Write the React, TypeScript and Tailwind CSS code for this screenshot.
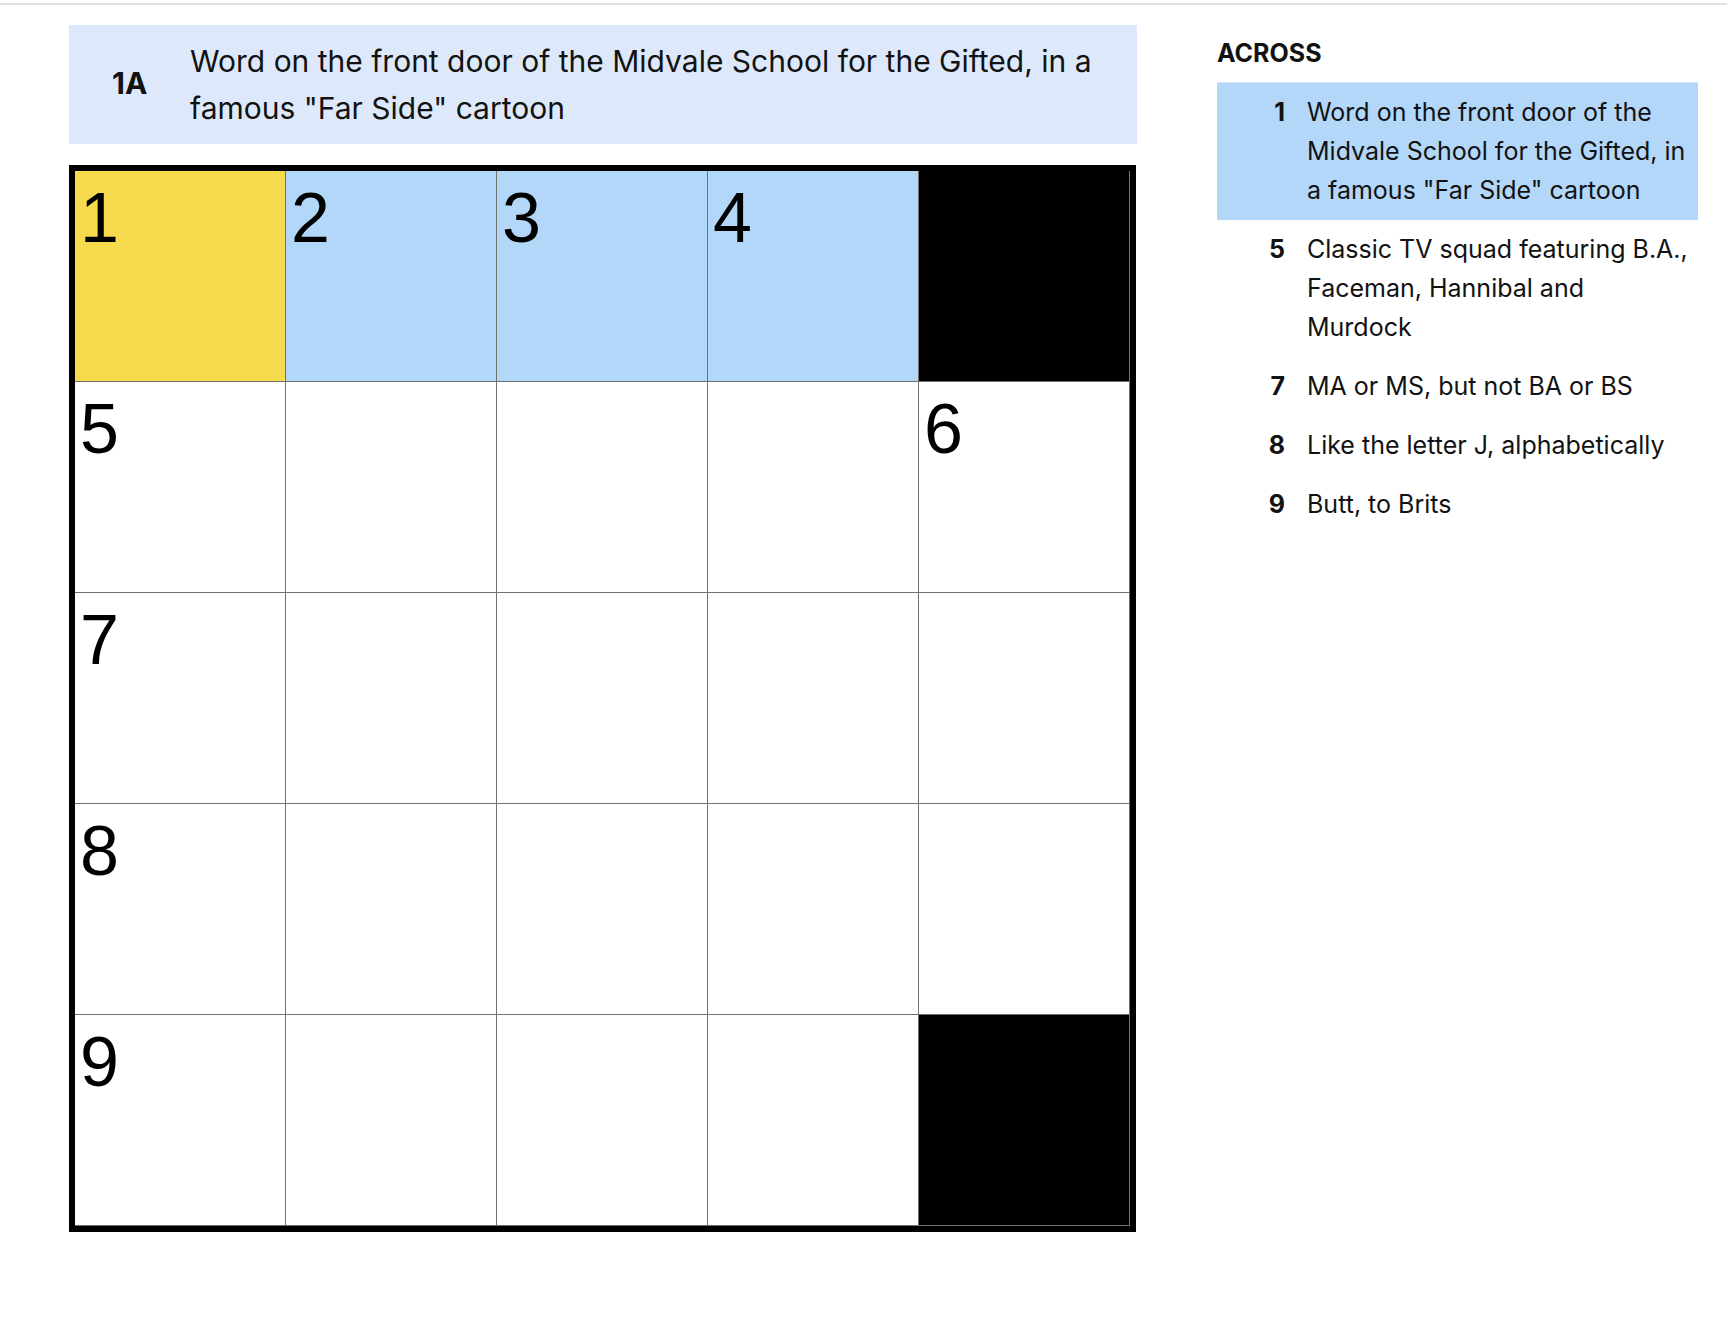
import React from "react";

type Cell = { num?: number; kind: "open" | "block" | "active" | "word" };

const GRID: Cell[][] = [
  [
    { num: 1, kind: "active" },
    { num: 2, kind: "word" },
    { num: 3, kind: "word" },
    { num: 4, kind: "word" },
    { kind: "block" },
  ],
  [{ num: 5, kind: "open" }, { kind: "open" }, { kind: "open" }, { kind: "open" }, { num: 6, kind: "open" }],
  [{ num: 7, kind: "open" }, { kind: "open" }, { kind: "open" }, { kind: "open" }, { kind: "open" }],
  [{ num: 8, kind: "open" }, { kind: "open" }, { kind: "open" }, { kind: "open" }, { kind: "open" }],
  [{ num: 9, kind: "open" }, { kind: "open" }, { kind: "open" }, { kind: "open" }, { kind: "block" }],
];

const ACROSS = [
  { num: 1, text: 'Word on the front door of the Midvale School for the Gifted, in a famous "Far Side" cartoon', active: true },
  { num: 5, text: "Classic TV squad featuring B.A., Faceman, Hannibal and Murdock" },
  { num: 7, text: "MA or MS, but not BA or BS" },
  { num: 8, text: "Like the letter J, alphabetically" },
  { num: 9, text: "Butt, to Brits" },
];

const cellBg: Record<Cell["kind"], string> = {
  open: "bg-white",
  block: "bg-black",
  active: "bg-[#f7da4e]",
  word: "bg-[#b3d7f9]",
};

function Board() {
  return (
    <div className="w-fit border-[6px] border-black bg-black">
      {GRID.map((row, r) => (
        <div key={r} className="flex">
          {row.map((cell, c) => (
            <div
              key={c}
              className={`h-[211px] w-[211px] border-r border-b border-[#707070] pl-[5px] pt-[12px] ${cellBg[cell.kind]}`}
            >
              {cell.num ? (
                <span className="block font-['Liberation_Sans',Arial,sans-serif] text-[70px] leading-none text-black">
                  {cell.num}
                </span>
              ) : null}
            </div>
          ))}
        </div>
      ))}
    </div>
  );
}

export default function App() {
  return (
    <div className="min-h-screen bg-white font-['Inter',sans-serif] text-[#121212]">
      <div className="pt-[3px]">
        <div className="h-[2px] w-full bg-[#e1e1e1]" />
      </div>

      <div className="flex pl-[69px] pt-[20px]">
        <div className="w-[1068px]">
          <div className="flex h-[119px] bg-[#dde9fb] pl-[43px] pt-[13px]">
            <div className="flex w-[78px] shrink-0 items-center pb-[16px] text-[30px] font-bold">1A</div>
            <p className="w-[915px] text-[30px] leading-[47px]">
              Word on the front door of the Midvale School for the Gifted, in a famous "Far Side" cartoon
            </p>
          </div>
          <div className="mt-[21px]">
            <Board />
          </div>
        </div>

        <div className="ml-[80px] w-[481px]">
          <h3 className="mt-[13px] text-[25px] font-bold leading-[30px]">ACROSS</h3>
          <ul className="mt-[14px]">
            {ACROSS.map((clue) => (
              <li
                key={clue.num}
                className={`flex py-[10px] text-[25px] leading-[39px] ${
                  clue.active ? "border-t border-[#cde2f7] bg-[#b3d7f9]" : ""
                }`}
              >
                <span className="w-[68px] shrink-0 text-right font-bold">{clue.num}</span>
                <span className="ml-[22px] w-[385px]">{clue.text}</span>
              </li>
            ))}
          </ul>
        </div>
      </div>
    </div>
  );
}
